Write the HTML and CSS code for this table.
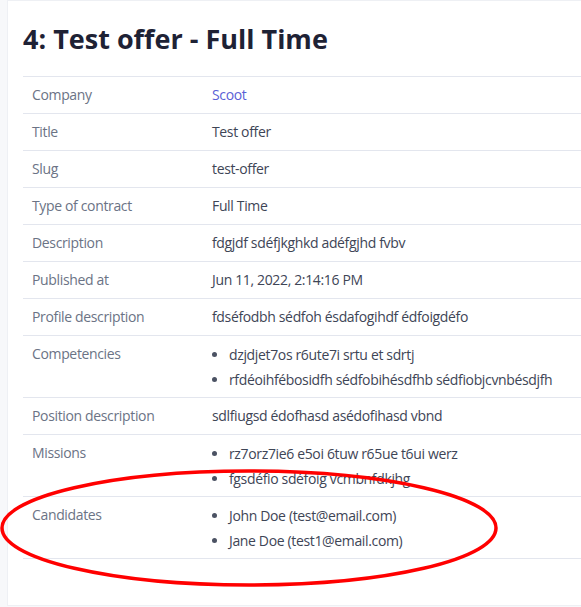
FILE: index.html
```html
<!DOCTYPE html>
<html lang="en">
<head>
    <meta charset="UTF-8">
    <meta name="viewport" content="width=device-width, initial-scale=1.0">
    <title>4: Test offer - Full Time</title>
    <link rel="stylesheet" href="styles.css">
</head>
<body>
    <!-- Offer card -->
    <main class="offer-card">
        <h1 class="offer-title">4: Test offer - Full Time</h1>

        <table class="offer-details">
            <tr>
                <th>Company</th>
                <td><a class="offer-link" href="#">Scoot</a></td>
            </tr>
            <tr>
                <th>Title</th>
                <td>Test offer</td>
            </tr>
            <tr>
                <th>Slug</th>
                <td>test-offer</td>
            </tr>
            <tr>
                <th>Type of contract</th>
                <td>Full Time</td>
            </tr>
            <tr>
                <th>Description</th>
                <td>fdgjdf sdéfjkghkd adéfgjhd fvbv</td>
            </tr>
            <tr>
                <th>Published at</th>
                <td>Jun 11, 2022, 2:14:16 PM</td>
            </tr>
            <tr>
                <th>Profile description</th>
                <td>fdséfodbh sédfoh ésdafogihdf édfoigdéfo</td>
            </tr>
            <tr class="list-row">
                <th>Competencies</th>
                <td>
                    <ul class="offer-list">
                        <li>dzjdjet7os r6ute7i srtu et sdrtj</li>
                        <li>rfdéoihfébosidfh sédfobihésdfhb sédfiobjcvnbésdjfh</li>
                    </ul>
                </td>
            </tr>
            <tr>
                <th>Position description</th>
                <td>sdlfiugsd édofhasd asédofihasd vbnd</td>
            </tr>
            <tr class="list-row">
                <th>Missions</th>
                <td>
                    <ul class="offer-list">
                        <li>rz7orz7ie6 e5oi 6tuw r65ue t6ui werz</li>
                        <li>fgsdéfio sdéfoig vcmbnfdkjhg</li>
                    </ul>
                </td>
            </tr>
            <tr class="list-row">
                <th>Candidates</th>
                <td>
                    <ul class="offer-list">
                        <li>John Doe (test@email.com)</li>
                        <li>Jane Doe (test1@email.com)</li>
                    </ul>
                </td>
            </tr>
        </table>
    </main>

    <!-- Red highlight drawn over the candidates row -->
    <svg class="highlight" width="581" height="607" viewBox="0 0 581 607">
        <ellipse cx="249" cy="528" rx="247" ry="57" fill="none" stroke="#ff0000" stroke-width="3.5"/>
    </svg>
</body>
</html>
```

FILE: styles.css
```css
* {
    margin: 0;
    padding: 0;
    box-sizing: border-box;
}

body {
    font-family: 'Open Sans', 'Noto Sans', sans-serif;
    background: #f7f8fa;
    color: #374151;
    width: 581px;
    height: 607px;
    overflow: hidden;
    position: relative;
}

.offer-card {
    margin-left: 7px;
    height: 606px;
    background: #ffffff;
    border: 1px solid #eef0f4;
    border-right: none;
    padding: 20px 0 0 15px;
}

.offer-title {
    font-size: 27px;
    font-weight: 700;
    line-height: 36px;
    color: #1e2235;
    margin-bottom: 19px;
}

.offer-details {
    width: 100%;
    border-collapse: collapse;
    font-size: 14px;
    letter-spacing: -0.35px;
}

.offer-details tr {
    border-top: 1px solid #e3e6ee;
    border-bottom: 1px solid #e3e6ee;
}

.offer-details th,
.offer-details td {
    text-align: left;
    vertical-align: top;
    padding: 6px 9px;
    line-height: 24px;
}

.offer-details th {
    width: 180px;
    font-weight: 400;
    color: #6b7385;
}

.offer-details td {
    color: #3e4556;
}

.list-row td {
    padding-bottom: 5px;
}

.offer-link {
    color: #5a5fd6;
    text-decoration: none;
}

.offer-list {
    list-style: disc;
    padding-left: 17px;
}

.offer-list li {
    line-height: 25px;
}

.offer-list li::marker {
    color: #4b5263;
}

.highlight {
    position: absolute;
    top: 0;
    left: 0;
    pointer-events: none;
}
```
